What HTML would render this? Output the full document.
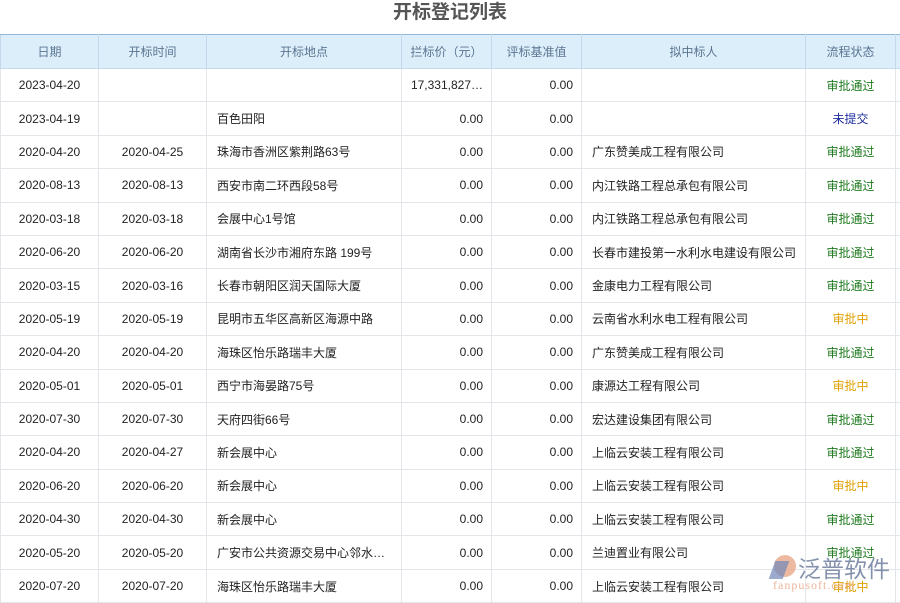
<!DOCTYPE html>
<html><head><meta charset="utf-8"><style>
body{margin:0;width:900px;height:600px;overflow:hidden;background:#fff;font-family:"Liberation Sans","Noto Sans CJK SC",sans-serif;}
.title{position:absolute;left:0;top:0;width:900px;height:34px;text-align:center;font-size:19px;font-weight:bold;color:#555;line-height:26px;}
table{position:absolute;left:0;top:34px;border-collapse:collapse;table-layout:fixed;width:905px;font-size:12px;color:#222;}
th{background:#ddeefb;color:#5a7590;font-weight:normal;height:33px;border:1px solid #c4d9ec;border-top:1px solid #8fb8d8;padding:0;box-sizing:border-box}
tr.d{height:33.4px}
td{border:1px solid #e2e6ea;padding:0 8px 0 10px;white-space:nowrap;overflow:hidden;text-overflow:ellipsis;box-sizing:border-box}
td.c{text-align:center;padding:0}
td.r{text-align:right;padding:0 8px 0 4px}
.g{color:#1d7a1d}.b{color:#1f2ea0}.o{color:#e0a000}
.wm{position:absolute;left:770px;top:553px;}
</style></head><body>
<div class="title">开标登记列表</div>
<table>
<colgroup><col style="width:98px"><col style="width:108px"><col style="width:195px"><col style="width:90px"><col style="width:90px"><col style="width:224px"><col style="width:90px"><col style="width:10px"></colgroup>
<tr style="height:34px"><th>日期</th><th>开标时间</th><th>开标地点</th><th>拦标价（元）</th><th>评标基准值</th><th>拟中标人</th><th>流程状态</th><th></th></tr>
<tr class="d"><td class="c">2023-04-20</td><td></td><td></td><td class="r">17,331,827…</td><td class="r">0.00</td><td></td><td class="c g">审批通过</td><td></td></tr>
<tr class="d"><td class="c">2023-04-19</td><td></td><td>百色田阳</td><td class="r">0.00</td><td class="r">0.00</td><td></td><td class="c b">未提交</td><td></td></tr>
<tr class="d"><td class="c">2020-04-20</td><td class="c">2020-04-25</td><td>珠海市香洲区紫荆路63号</td><td class="r">0.00</td><td class="r">0.00</td><td>广东赞美成工程有限公司</td><td class="c g">审批通过</td><td></td></tr>
<tr class="d"><td class="c">2020-08-13</td><td class="c">2020-08-13</td><td>西安市南二环西段58号</td><td class="r">0.00</td><td class="r">0.00</td><td>内江铁路工程总承包有限公司</td><td class="c g">审批通过</td><td></td></tr>
<tr class="d"><td class="c">2020-03-18</td><td class="c">2020-03-18</td><td>会展中心1号馆</td><td class="r">0.00</td><td class="r">0.00</td><td>内江铁路工程总承包有限公司</td><td class="c g">审批通过</td><td></td></tr>
<tr class="d"><td class="c">2020-06-20</td><td class="c">2020-06-20</td><td>湖南省长沙市湘府东路 199号</td><td class="r">0.00</td><td class="r">0.00</td><td style="padding:0 0 0 10px;text-overflow:clip">长春市建投第一水利水电建设有限公司</td><td class="c g">审批通过</td><td></td></tr>
<tr class="d"><td class="c">2020-03-15</td><td class="c">2020-03-16</td><td>长春市朝阳区润天国际大厦</td><td class="r">0.00</td><td class="r">0.00</td><td>金康电力工程有限公司</td><td class="c g">审批通过</td><td></td></tr>
<tr class="d"><td class="c">2020-05-19</td><td class="c">2020-05-19</td><td>昆明市五华区高新区海源中路</td><td class="r">0.00</td><td class="r">0.00</td><td>云南省水利水电工程有限公司</td><td class="c o">审批中</td><td></td></tr>
<tr class="d"><td class="c">2020-04-20</td><td class="c">2020-04-20</td><td>海珠区怡乐路瑞丰大厦</td><td class="r">0.00</td><td class="r">0.00</td><td>广东赞美成工程有限公司</td><td class="c g">审批通过</td><td></td></tr>
<tr class="d"><td class="c">2020-05-01</td><td class="c">2020-05-01</td><td>西宁市海晏路75号</td><td class="r">0.00</td><td class="r">0.00</td><td>康源达工程有限公司</td><td class="c o">审批中</td><td></td></tr>
<tr class="d"><td class="c">2020-07-30</td><td class="c">2020-07-30</td><td>天府四街66号</td><td class="r">0.00</td><td class="r">0.00</td><td>宏达建设集团有限公司</td><td class="c g">审批通过</td><td></td></tr>
<tr class="d"><td class="c">2020-04-20</td><td class="c">2020-04-27</td><td>新会展中心</td><td class="r">0.00</td><td class="r">0.00</td><td>上临云安装工程有限公司</td><td class="c g">审批通过</td><td></td></tr>
<tr class="d"><td class="c">2020-06-20</td><td class="c">2020-06-20</td><td>新会展中心</td><td class="r">0.00</td><td class="r">0.00</td><td>上临云安装工程有限公司</td><td class="c o">审批中</td><td></td></tr>
<tr class="d"><td class="c">2020-04-30</td><td class="c">2020-04-30</td><td>新会展中心</td><td class="r">0.00</td><td class="r">0.00</td><td>上临云安装工程有限公司</td><td class="c g">审批通过</td><td></td></tr>
<tr class="d"><td class="c">2020-05-20</td><td class="c">2020-05-20</td><td>广安市公共资源交易中心邻水…</td><td class="r">0.00</td><td class="r">0.00</td><td>兰迪置业有限公司</td><td class="c g">审批通过</td><td></td></tr>
<tr class="d"><td class="c">2020-07-20</td><td class="c">2020-07-20</td><td>海珠区怡乐路瑞丰大厦</td><td class="r">0.00</td><td class="r">0.00</td><td>上临云安装工程有限公司</td><td class="c o">审批中</td><td></td></tr>
</table>
<div class="wm">
<div style="position:absolute;left:4px;top:2px;width:22px;height:22px;border-radius:50%;background:#e9a98a;opacity:.8"></div>
<div style="position:absolute;left:2px;top:8px;width:14px;height:18px;background:#6f87b8;opacity:.7;transform:skewX(-20deg)"></div>
<div style="position:absolute;left:28px;top:-3px;font-size:23px;color:#6f7f9f;opacity:.85;white-space:nowrap;font-family:'Noto Sans CJK SC',sans-serif">泛普软件</div>
<div style="position:absolute;left:3px;top:25px;font-size:12px;color:#e9a98a;opacity:.85;font-family:'Liberation Serif',serif;letter-spacing:1px">fanpusoft.com</div>
</div>
</body></html>
